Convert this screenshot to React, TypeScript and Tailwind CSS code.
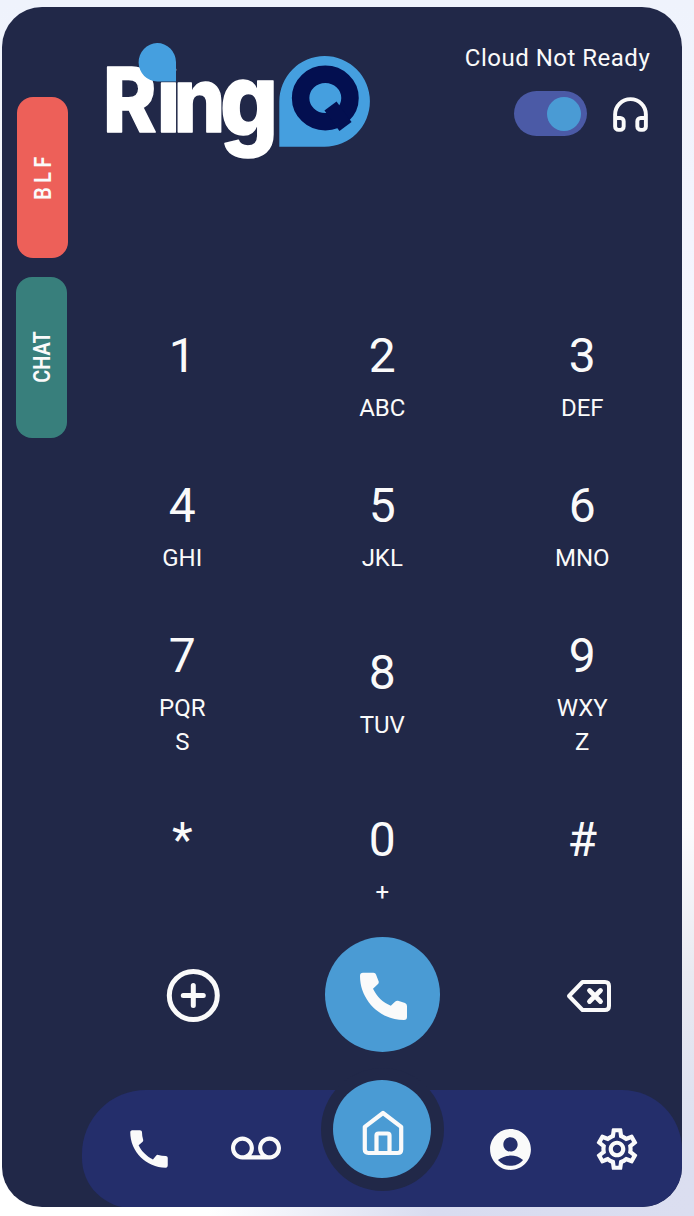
import React from "react";
import { Headphones } from "lucide-react";
import { MdCall, MdVoicemail, MdAccountCircle, MdOutlineSettings } from "react-icons/md";

const keys: { digit: string; labels: string[] }[] = [
  { digit: "1", labels: [] },
  { digit: "2", labels: ["ABC"] },
  { digit: "3", labels: ["DEF"] },
  { digit: "4", labels: ["GHI"] },
  { digit: "5", labels: ["JKL"] },
  { digit: "6", labels: ["MNO"] },
  { digit: "7", labels: ["PQR", "S"] },
  { digit: "8", labels: ["TUV"] },
  { digit: "9", labels: ["WXY", "Z"] },
  { digit: "*", labels: [] },
  { digit: "0", labels: ["+"] },
  { digit: "#", labels: [] },
];

function Logo() {
  return (
    <svg width="290" height="140" viewBox="0 0 290 140" className="block shrink-0 overflow-visible">
      <g transform="scale(0.9 1)">
        <text
          x="9 69 87.5"
          y="102"
          fill="#ffffff"
          stroke="#ffffff"
          strokeWidth="1.500"
          strokeLinejoin="round"
          className="font-['Inter',sans-serif] text-[90px] font-extrabold"
        >
          Rin
          <tspan x="139" y="106.500" className="text-[101px]">g</tspan>
        </text>
      </g>
      <path d="M81 51.500H62.500A18.700 19.200 0 1 1 81 32Z" fill="#459fdf" />
      <path d="M184.300 116.700V71.500A45.300 45.300 0 1 1 229.600 116.700Z" fill="#459fdf" />
      <ellipse cx="230.300" cy="68" rx="24.700" ry="23.700" fill="none" stroke="#030f50" strokeWidth="17.500" />
      <path d="M235.500 76L250.500 96.500" fill="none" stroke="#030f50" strokeWidth="15" />
    </svg>
  );
}

function Header() {
  return (
    <header className="flex h-[313.75px] shrink-0 justify-between pt-[22.75px] pl-[12.75px] pr-[32px]">
      <Logo />
      <div className="-ml-10 flex flex-col items-end pt-3">
        <p className="text-2xl leading-8 tracking-[0.5px] whitespace-nowrap">Cloud Not Ready</p>
        <div className="-mr-[0.75px] mt-[17px] flex items-center gap-[23px]">
          <div className="flex h-[45px] w-[73px] items-center justify-end rounded-full bg-[#4b5aa6] pr-1.5">
            <div className="h-[34px] w-[34px] rounded-full bg-[#4a9bd4]" />
          </div>
          <Headphones size={41} strokeWidth={2.3} className="mt-px" />
        </div>
      </div>
    </header>
  );
}

function Keypad() {
  return (
    <div className="grid shrink-0 grid-cols-3 items-center gap-y-[46px]">
      {keys.map((k) => (
        <button key={k.digit} className="flex flex-col items-center">
          <span className="text-5xl leading-[70px]">{k.digit}</span>
          {(k.labels.length ? k.labels : [""]).map((label, i) => (
            <span key={i} className="h-[34px] text-2xl leading-[34px]">
              {label}
            </span>
          ))}
        </button>
      ))}
    </div>
  );
}

function Actions() {
  return (
    <div className="mt-[27.75px] grid h-[115px] shrink-0 grid-cols-3 items-center">
      <svg width="54" height="54" viewBox="0 0 54 54" fill="none" stroke="currentColor" strokeWidth="5" strokeLinecap="round" className="ml-[84px] mt-[3px]">
        <circle cx="27.300" cy="26.500" r="24" />
        <path d="M27.300 16.500v20M17.300 26.500h20" />
      </svg>
      <div className="flex h-[115px] w-[115px] items-center justify-center justify-self-center rounded-full bg-[#4a9bd4]">
        <svg width="47" height="48" viewBox="0 0 47 48" fill="currentColor" className="ml-0.5 mt-[3px]">
          <path d="M3 .7H13.500Q15.500 .7 16 2.500L18.700 9.600Q19 11.200 18 12L13 16.800C17 24.500 22.500 30.500 30.800 33.700L35 29.800Q36.400 28.500 38 28.800L45 31Q47 31.800 47 34V45Q47 48 44 48C20 48 0 28 0 4Q0 .7 3 .7Z" />
        </svg>
      </div>
      <svg width="46" height="34" viewBox="0 0 46 34" fill="none" stroke="currentColor" strokeWidth="4" strokeLinecap="round" strokeLinejoin="round" className="ml-[83.500px] mt-[3px]">
        <path d="M16.500 3H39Q43 3 43 7V27Q43 31 39 31H16.500L3 17Z" />
        <path d="M23.500 11.500l11 11M34.500 11.500l-11 11" strokeWidth="4.800" />
      </svg>
    </div>
  );
}

function BottomNav() {
  return (
    <nav className="mt-[38px] grid h-[118px] shrink-0 grid-cols-[119px_119px_124px_119px_119px] rounded-tl-[64px] rounded-tr-[60px] rounded-bl-[50px] bg-[#242e6b] text-[50px]">
      <button className="flex items-center pt-px pl-[41.500px]">
        <MdCall />
      </button>
      <button className="flex items-center pt-px pl-[29.500px]">
        <MdVoicemail />
      </button>
      <button className="-mt-[22px] ml-[0.500px] flex h-[123px] w-[123px] items-center justify-center rounded-full bg-[#212848]">
        <span className="flex h-[98px] w-[98px] items-center justify-center rounded-full bg-[#4a9bd4]">
          <svg width="42" height="46" viewBox="0 0 42 46" fill="none" stroke="currentColor" strokeWidth="4.200" strokeLinejoin="round" className="mt-2 ml-px">
            <path d="M21 3L39.200 16.800V39.500Q39.200 43 35.700 43H6.300Q2.800 43 2.800 39.500V16.800Z" />
            <path d="M14.500 43V25.500Q14.500 23.500 16.500 23.500H25.500Q27.500 23.500 27.500 25.500V43" />
          </svg>
        </span>
      </button>
      <button className="flex items-center pt-px pl-[41.500px]">
        <MdAccountCircle size={49} />
      </button>
      <button className="flex items-center pt-px pl-[28.500px]">
        <MdOutlineSettings />
      </button>
    </nav>
  );
}

export default function App() {
  return (
    <div className="h-[1216px] w-[694px] overflow-hidden bg-[linear-gradient(90deg,#ffffff_0%,#ffffff_30%,#d9dcf0_62%,#dbdef0_100%),linear-gradient(180deg,#eff3fc_0%,#f3f4fd_20%,#ffffff_56%,#fbfbfd_68%,#e9eaf1_80%,#dfe2f0_90%,#dadef0_100%)] bg-[length:100%_46px,100%_100%] bg-[position:left_bottom,left_top] bg-no-repeat pt-[7.25px] font-['Roboto',sans-serif] text-[#fafafa]">
      <div className="flex">
        <div className="w-[2.25px] shrink-0 bg-gradient-to-b from-[#eff3fc] to-white to-40%" />
        <div className="flex h-[1200px] w-[680px] shrink-0 overflow-hidden rounded-[40px] bg-[#212848]">
          <aside className="flex w-20 shrink-0 flex-col gap-[19.5px] pt-[89.75px] text-2xl font-semibold">
            <button className="ml-[14.75px] flex h-[160.5px] w-[51px] items-center justify-center rounded-2xl bg-[#ed6059] pb-0.5">
              <span className="-rotate-90 scale-x-[0.82] tracking-[5.5px]">BLF</span>
            </button>
            <button className="ml-[13.75px] flex h-[160.5px] w-[51px] items-center justify-center rounded-2xl bg-[#387f7c] pl-[1.500px]">
              <span className="-rotate-90 scale-x-[0.83]">CHAT</span>
            </button>
          </aside>
          <main className="flex w-[600px] flex-col">
            <Header />
            <Keypad />
            <Actions />
            <BottomNav />
          </main>
        </div>
      </div>
    </div>
  );
}
